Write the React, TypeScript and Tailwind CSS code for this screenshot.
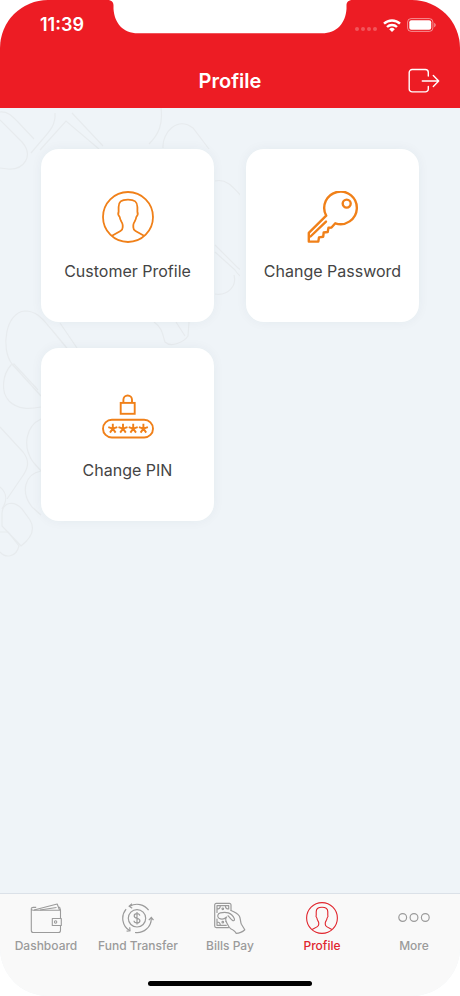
import React from 'react';

type IconProps = { className?: string; strokeWidth?: number };

function PersonIcon({ className, strokeWidth = 1.8 }: IconProps) {
  return (
    <svg viewBox="0 0 52 52" fill="none" stroke="currentColor" strokeWidth={strokeWidth} strokeLinejoin="round" className={className} aria-hidden="true">
      <circle cx="26" cy="26" r="25" />
      <path d="M10 44.800L18.500 40C20.300 39 20.700 38.300 20.700 36.300V34C20.700 32.700 20.300 32.100 19.300 30.500C18.300 28.800 17.900 27.600 17.700 26C16.200 24.300 15.700 22.800 16.600 21V16C16.600 11 19 8.600 26 8.600S35.400 11 35.400 16V21C36.300 22.800 35.800 24.300 34.300 26C34.100 27.600 33.700 28.800 32.700 30.500C31.700 32.100 31.300 32.700 31.300 34V36.300C31.300 38.300 31.700 39 33.500 40L42 44.800" />
    </svg>
  );
}

function KeyIcon({ className }: IconProps) {
  return (
    <svg viewBox="0 0 52 52" fill="none" stroke="currentColor" strokeWidth="2.400" strokeLinejoin="round" strokeLinecap="round" className={className} aria-hidden="true">
      <path d="M19.200 24.600A16.300 16.300 0 1 1 28.300 32.300L24.500 36.500 21.500 36.800 20.700 41 16.700 41.500 16.200 45.700 12 46.400 11.300 50.600H1.800V41.900z" />
      <path d="M19 30.600L3.500 45.500" />
      <circle cx="39.700" cy="12.600" r="4" />
    </svg>
  );
}

function PinIcon({ className }: IconProps) {
  return (
    <svg viewBox="0 0 52 52" fill="none" stroke="currentColor" strokeWidth="1.900" className={className} aria-hidden="true">
      <rect x="18.700" y="12.900" width="14" height="10.900" />
      <path d="M21.400 12.900V9.800a4.300 4.300 0 0 1 8.600 0v3.100" />
      <rect x="1" y="29.800" width="50" height="17.700" rx="8.850" />
      {[10.8, 21, 31.2, 41.4].map((x) => (
        <path key={x} d={`M${x} 38.600v-4.800M${x} 38.600l4.500-1.500M${x} 38.600l2.800 4M${x} 38.600l-2.800 4M${x} 38.600l-4.500-1.500`} />
      ))}
    </svg>
  );
}

function WalletIcon({ className }: IconProps) {
  return (
    <svg viewBox="0 0 32 32" fill="none" stroke="currentColor" strokeWidth="1.100" strokeLinejoin="round" className={className} aria-hidden="true">
      <path d="M30.500 16.500V8.200H3.200C1.900 8.200 1.300 7.500 1.300 6.700V28.500c0 1.300.7 2 2 2h25.200c1.300 0 2-.7 2-2v-5" />
      <path d="M1.300 6.700c0-1 .7-1.300 1.900-1.300h3" />
      <path d="M4 8l23.200-6 2.300 6M10 8l16.500-2.500" />
      <path d="M28.500 5.300h1.200l.8 2.900" />
      <rect x="22.300" y="16.500" width="9" height="7" />
      <circle cx="25.600" cy="20" r="1.200" />
    </svg>
  );
}

function TransferIcon({ className }: IconProps) {
  return (
    <svg viewBox="0 0 32 32" fill="none" stroke="currentColor" strokeWidth="1.200" className={className} aria-hidden="true">
      <circle cx="15" cy="16.300" r="8.700" />
      <path d="M7.800 4.200A14.300 14.300 0 0 1 26.600 8.200" />
      <path d="M10 1.700L7.200 4.200l3 2" />
      <path d="M29.300 16A14.300 14.300 0 0 1 13 30.500" />
      <path d="M26.800 18.200l2.500-2.700 2.200 2.700" />
      <path d="M4.100 7.200A14.300 14.300 0 0 0 7.800 28.700" />
      <path d="M4.600 29.200l3.400-.4-.3-3.500" />
      <path d="M17.800 13.700c-.2-1.400-1.300-2-2.800-2s-2.800.8-2.800 2.200c0 3.200 5.700 1.500 5.700 4.800 0 1.400-1.300 2.200-2.900 2.200s-2.900-.8-3-2.200M15 10v12.600" />
    </svg>
  );
}

function BillsIcon({ className }: IconProps) {
  return (
    <svg viewBox="0 0 32 32" fill="none" stroke="currentColor" strokeWidth="1.200" strokeLinejoin="round" strokeLinecap="round" className={className} aria-hidden="true">
      <path d="M17 8.500V2.900C17 2 16.400 1.400 15.500 1.400H2.200C1.300 1.400.7 2 .7 2.900v21.200c0 .9.600 1.500 1.500 1.500h12.300" />
      <path d="M3 7V3.700h3.300C6.300 5.500 5 7 3 7zM14.700 7V3.700h-3.300c0 1.800 1.300 3.300 3.300 3.300zM3 20v3.300h3.300C6.300 21.500 5 20 3 20zM3 7v3.500M3 17v3M6.300 3.700h5.100M6.300 23.300h6" />
      <circle cx="8.800" cy="6.800" r=".8" />
      <circle cx="8.800" cy="20.200" r=".8" />
      <path d="M17 8.500C20.500 9.800 23.500 11.500 25.300 14c1.400 2.500.9 5.500 2.100 8.300l3.400 5.400c-2.400 2.200-5.300 3.600-8.700 3.600-.7-2.200-2.800-3.300-5.400-4.600-2.400-1.300-3-4.400-4.700-7.300" />
      <path d="M12 19.400c-.6-1.400-.3-3.200.6-4.400-2.300 2.300-5.600 2.500-7.600 1.300-2.200-1.400-1.400-4.800 1.200-5.400 2.700-.7 5.600-.9 8.200 0 2.800 1 4.900 3 6 6 .4 1.700-.8 2.300-2.100 1.400-1.600-1.100-2.600-3-4.300-4.500" />
    </svg>
  );
}

function MoreIcon({ className }: IconProps) {
  return (
    <svg viewBox="0 0 32 32" fill="none" stroke="currentColor" strokeWidth="1.200" className={className} aria-hidden="true">
      <circle cx="4.700" cy="15.500" r="3.900" />
      <circle cx="16" cy="15.500" r="3.900" />
      <circle cx="27.300" cy="15.500" r="3.900" />
    </svg>
  );
}

function LogoutIcon({ className }: IconProps) {
  return (
    <svg viewBox="0 0 32 32" fill="none" stroke="currentColor" strokeWidth="1.400" strokeLinejoin="round" strokeLinecap="round" className={className} aria-hidden="true">
      <path d="M20.300 11V7.500a3 3 0 0 0-3-3H4.200a3 3 0 0 0-3 3v16.400a3 3 0 0 0 3 3h13.100a3 3 0 0 0 3-3V21.500" />
      <path d="M14.300 16h16.400M25.300 10.600l5.400 5.400-5.400 5.400" />
    </svg>
  );
}

function StatusIcons() {
  return (
    <div className="flex items-center gap-1.5">
      <div className="flex gap-0.5 pt-2">
        {[0, 1, 2, 3].map((i) => (
          <span key={i} className="size-1 rounded-full bg-white/25" />
        ))}
      </div>
      <svg viewBox="0 0 18 13" className="h-[13px] w-[18px]" fill="none" stroke="white" strokeWidth="2.400" aria-hidden="true">
        <path d="M1 4.700a11.500 11.500 0 0 1 16 0" />
        <path d="M4 8a7.200 7.200 0 0 1 10 0" />
        <path d="M9 13L6.200 10.200a4 4 0 0 1 5.600 0z" fill="white" stroke="none" />
      </svg>
      <svg viewBox="0 0 29 14" className="h-[14px] w-[29px]" aria-hidden="true">
        <rect x=".6" y=".6" width="25.300" height="12.800" rx="3.500" fill="none" stroke="white" strokeOpacity=".5" />
        <rect x="2.300" y="2.300" width="21.900" height="9.400" rx="2" fill="white" />
        <path d="M27.200 4.700v4.600c1-.4 1.500-1.300 1.500-2.300s-.5-1.900-1.500-2.300z" fill="white" fillOpacity=".5" />
      </svg>
    </div>
  );
}

// Faint capsule outlines behind the cards
function Pattern() {
  return (
    <svg viewBox="0 0 240 452" className="pointer-events-none absolute top-0 left-0 h-[452px] w-[240px]" fill="none" stroke="#e7ebee" strokeWidth="1.200" aria-hidden="true">
      <path d="M0 12L22 34C34 48 24 62 8 61L0 60M0 4C8 3 13 9 18 14L34 31" />
      <path d="M55 5C56 17 49 24 42 32L31 45M40 42L66 13L99 41M72 5L103 38" />
      <path d="M161 0C163 16 159 26 149 36M163 40C162 24 178 8 193 20L209 41" />
      <path d="M215 73C227 70 234 80 244 91M215 137L238 160C249 167 243 175 235 162L215 144M215 186C228 188 237 178 234 167" />
      <path d="M41 288L12 256C0 240 6 204 25 203C38 203 44 213 52 222L75 250M60 215L77 240" />
      <path d="M41 299C30 301 18 302 9 293C0 283 3 266 11 257L14 256L38 282" />
      <path d="M154 214C163 220 163 229 165 234C171 240 184 234 188 228L189 214M176 214L185 228" />
      <path d="M41 311C26 318 22 338 33 354L41 363M41 363C25 366 20 384 32 399L41 407" />
      <path d="M0 319L23 344C31 354 27 362 22 369L7 391M0 379C8 386 7 393 2 401" />
      <path d="M2 405C3 394 14 392 22 401L30 412C36 422 30 431 21 438L2 418Z" />
      <path d="M0 424L8 424L19 438C16 450 5 450 0 444" />
    </svg>
  );
}

const cards = [
  { label: 'Customer Profile', Icon: PersonIcon },
  { label: 'Change Password', Icon: KeyIcon },
  { label: 'Change PIN', Icon: PinIcon },
];

const tabs = [
  { label: 'Dashboard', Icon: WalletIcon },
  { label: 'Fund Transfer', Icon: TransferIcon },
  { label: 'Bills Pay', Icon: BillsIcon },
  { label: 'Profile', Icon: PersonIcon, active: true },
  { label: 'More', Icon: MoreIcon },
];

export default function App() {
  return (
    <div className="bg-white font-['Inter','Liberation_Sans',sans-serif]">
      <div className="flex min-h-screen flex-col overflow-hidden rounded-[48px] bg-[#eff4f8]">
        <header className="relative bg-[#ed1c24] text-white">
          {/* Notch */}
          <svg viewBox="0 0 246 34" className="absolute top-0 left-1/2 h-[34px] w-[246px] -translate-x-1/2" fill="white" aria-hidden="true">
            <path d="M0 0C4 0 6.500 1.500 6.500 5.500V9C7.500 23 16 33.300 31 33.300H215C230 33.300 238.500 23 239.500 9V5.500C239.500 1.500 242 0 246 0Z" />
          </svg>
          <div className="flex h-[54px] items-center justify-between pr-6 pb-1 pl-10">
            <span className="text-lg font-semibold">11:39</span>
            <StatusIcons />
          </div>
          <div className="grid h-[54px] grid-cols-[1fr_auto_1fr] items-center px-5">
            <h1 className="col-start-2 text-xl font-semibold">Profile</h1>
            <button type="button" aria-label="Log out" className="justify-self-end">
              <LogoutIcon className="size-8" />
            </button>
          </div>
        </header>

        <main className="relative flex-1">
          <Pattern />
          <div className="relative grid grid-cols-2 gap-x-8 gap-y-[26px] px-[41px] py-[41px]">
            {cards.map(({ label, Icon }) => (
              <button
                key={label}
                type="button"
                className="flex aspect-square flex-col items-center justify-center gap-4 rounded-[18px] bg-white pt-0.5 shadow-[0_0_12px_rgba(30,50,80,0.05)]"
              >
                <Icon className="size-[52px] text-[#f08019]" />
                <span className="text-base text-[#444444]">{label}</span>
              </button>
            ))}
          </div>
        </main>

        <footer className="border-t border-[#dbe1e8] bg-[#f9f9f9]">
          <nav className="grid grid-cols-5">
            {tabs.map(({ label, Icon, active }) => (
              <a
                key={label}
                href="#"
                aria-current={active ? 'page' : undefined}
                className={`flex flex-col items-center gap-1 pt-2 text-xs font-medium whitespace-nowrap ${active ? 'text-[#e0262e]' : 'text-[#9b9b9b]'}`}
              >
                <Icon className="size-8" />
                {label}
              </a>
            ))}
          </nav>
          <div className="mx-auto mt-[27px] mb-2.5 h-[5px] w-[164px] rounded-full bg-black" />
        </footer>
      </div>
    </div>
  );
}
